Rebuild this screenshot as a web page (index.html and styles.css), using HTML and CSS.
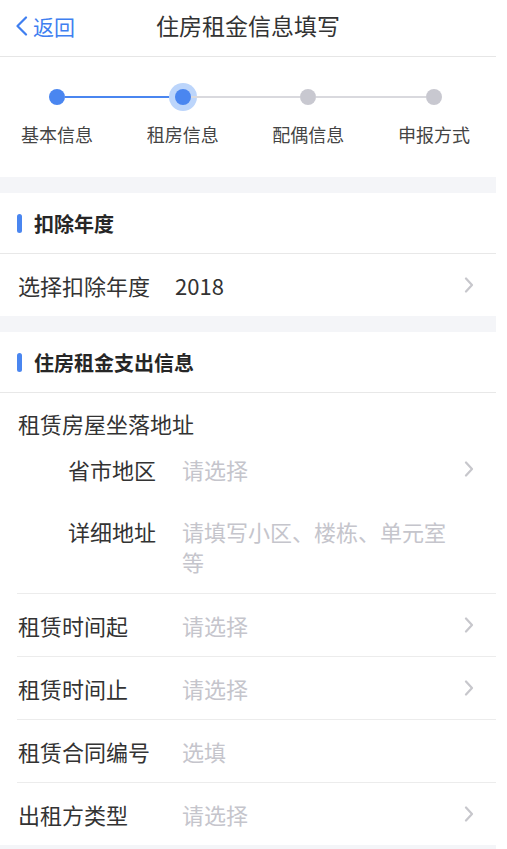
FILE: index.html
```html
<!DOCTYPE html>
<html lang="zh-CN">
<head>
    <meta charset="UTF-8">
    <meta name="viewport" content="width=device-width, initial-scale=1.0">
    <title>住房租金信息填写</title>
    <link rel="stylesheet" href="styles.css">
</head>
<body>
    <div class="page">
        <header class="topbar">
            <a class="back" href="#">
                <svg class="back-icon" width="14" height="20" viewBox="0 0 14 20"><polyline points="11,1.5 2.5,10 11,18.5" fill="none" stroke="#3f7ff0" stroke-width="2.2" stroke-linecap="round" stroke-linejoin="round"/></svg>
                <span>返回</span>
            </a>
            <h1 class="title">住房租金信息填写</h1>
        </header>

        <section class="steps">
            <div class="track">
                <span class="dot done"></span>
                <span class="bar done"></span>
                <span class="dot current"></span>
                <span class="bar"></span>
                <span class="dot"></span>
                <span class="bar"></span>
                <span class="dot"></span>
            </div>
            <div class="step-labels">
                <span>基本信息</span>
                <span>租房信息</span>
                <span>配偶信息</span>
                <span>申报方式</span>
            </div>
        </section>

        <div class="gap"></div>

        <section class="group">
            <h2 class="group-title">扣除年度</h2>
            <div class="row row-year">
                <span class="label">选择扣除年度</span>
                <span class="value">2018</span>
                <svg class="arrow" width="10" height="16" viewBox="0 0 10 16"><polyline points="2,1.5 8,8 2,14.5" fill="none" stroke="#c7c7cc" stroke-width="2.2" stroke-linecap="round" stroke-linejoin="round"/></svg>
            </div>
        </section>

        <div class="gap"></div>

        <section class="group">
            <h2 class="group-title">住房租金支出信息</h2>
            <div class="address">
                <div class="address-title">租赁房屋坐落地址</div>
                <div class="sub-row">
                    <span class="label">省市地区</span>
                    <span class="value placeholder">请选择</span>
                    <svg class="arrow" width="10" height="16" viewBox="0 0 10 16"><polyline points="2,1.5 8,8 2,14.5" fill="none" stroke="#c7c7cc" stroke-width="2.2" stroke-linecap="round" stroke-linejoin="round"/></svg>
                </div>
                <div class="sub-row">
                    <span class="label">详细地址</span>
                    <span class="value placeholder">请填写小区、楼栋、单元室等</span>
                </div>
            </div>
            <div class="row">
                <span class="label">租赁时间起</span>
                <span class="value placeholder">请选择</span>
                <svg class="arrow" width="10" height="16" viewBox="0 0 10 16"><polyline points="2,1.5 8,8 2,14.5" fill="none" stroke="#c7c7cc" stroke-width="2.2" stroke-linecap="round" stroke-linejoin="round"/></svg>
            </div>
            <div class="row">
                <span class="label">租赁时间止</span>
                <span class="value placeholder">请选择</span>
                <svg class="arrow" width="10" height="16" viewBox="0 0 10 16"><polyline points="2,1.5 8,8 2,14.5" fill="none" stroke="#c7c7cc" stroke-width="2.2" stroke-linecap="round" stroke-linejoin="round"/></svg>
            </div>
            <div class="row">
                <span class="label">租赁合同编号</span>
                <span class="value placeholder">选填</span>
            </div>
            <div class="row">
                <span class="label">出租方类型</span>
                <span class="value placeholder">请选择</span>
                <svg class="arrow" width="10" height="16" viewBox="0 0 10 16"><polyline points="2,1.5 8,8 2,14.5" fill="none" stroke="#c7c7cc" stroke-width="2.2" stroke-linecap="round" stroke-linejoin="round"/></svg>
            </div>
        </section>

        <div class="gap"></div>
    </div>
</body>
</html>
```

FILE: styles.css
```css
body {
    margin: 0;
    background-color: #ffffff;
    font-family: "Noto Sans CJK SC", "Noto Sans", sans-serif;
    color: #333333;
}

.page {
    width: 496px;
    background-color: #ffffff;
}

/* top bar */
.topbar {
    position: relative;
    height: 56px;
    border-bottom: 1px solid #e6e6e6;
    display: flex;
    align-items: center;
    justify-content: center;
}

.back {
    position: absolute;
    left: 15px;
    top: 0;
    height: 52px;
    display: flex;
    align-items: center;
    gap: 4px;
    color: #3f7ff0;
    font-size: 21px;
    text-decoration: none;
}

.title {
    margin: 0 0 6px 0;
    font-size: 23px;
    font-weight: normal;
    color: #333333;
}

/* steps */
.steps {
    height: 120px;
}

.track {
    display: flex;
    align-items: center;
    padding: 32px 54px 0 49px;
    height: 16px;
}

.dot {
    width: 16px;
    height: 16px;
    border-radius: 50%;
    background-color: #c8c8d0;
    flex: none;
}

.dot.done,
.dot.current {
    background-color: #4a86f0;
}

.dot.current {
    box-shadow: 0 0 0 6px #bcd5fb;
}

.bar {
    flex: 1;
    height: 2px;
    background-color: #d9d9de;
}

.bar.done {
    background-color: #4a86f0;
}

.step-labels {
    display: flex;
    justify-content: space-between;
    padding: 14px 26px 0 21px;
    font-size: 18px;
    line-height: 30px;
    color: #444444;
}

.gap {
    height: 16px;
    background-color: #f4f5f8;
}

/* groups */
.group-title {
    margin: 0;
    height: 60px;
    display: flex;
    align-items: center;
    padding-left: 17px;
    font-size: 20px;
    font-weight: bold;
    color: #262626;
    border-bottom: 1px solid #e8e8e8;
}

.group-title::before {
    content: "";
    width: 5px;
    height: 19px;
    border-radius: 3px;
    background-color: #4a86f0;
    margin-right: 12px;
}

.row {
    display: flex;
    align-items: center;
    padding: 16px 22px 16px 1px;
    margin-left: 17px;
    line-height: 30px;
    font-size: 22px;
    border-top: 1px solid #ececec;
}

.group-title + .row {
    border-top: none;
    margin-left: 0;
    padding-left: 18px;
}

.label {
    flex: none;
    width: 164px;
    color: #333333;
}

.row-year .label {
    width: 157px;
}

.value {
    flex: 1;
    color: #333333;
}

.placeholder {
    color: #c5c5cc;
}

.arrow {
    flex: none;
    margin-left: 8px;
}

/* address block */
.address {
    padding: 15px 0 1px 0;
    font-size: 22px;
    line-height: 30px;
}

.address-title {
    padding-left: 18px;
    color: #333333;
}

.sub-row {
    display: flex;
    align-items: flex-start;
    padding: 16px 22px 16px 68px;
}

.sub-row .label {
    width: 114px;
}

.sub-row .value {
    padding-right: 20px;
}

.sub-row .arrow {
    align-self: center;
}
```
